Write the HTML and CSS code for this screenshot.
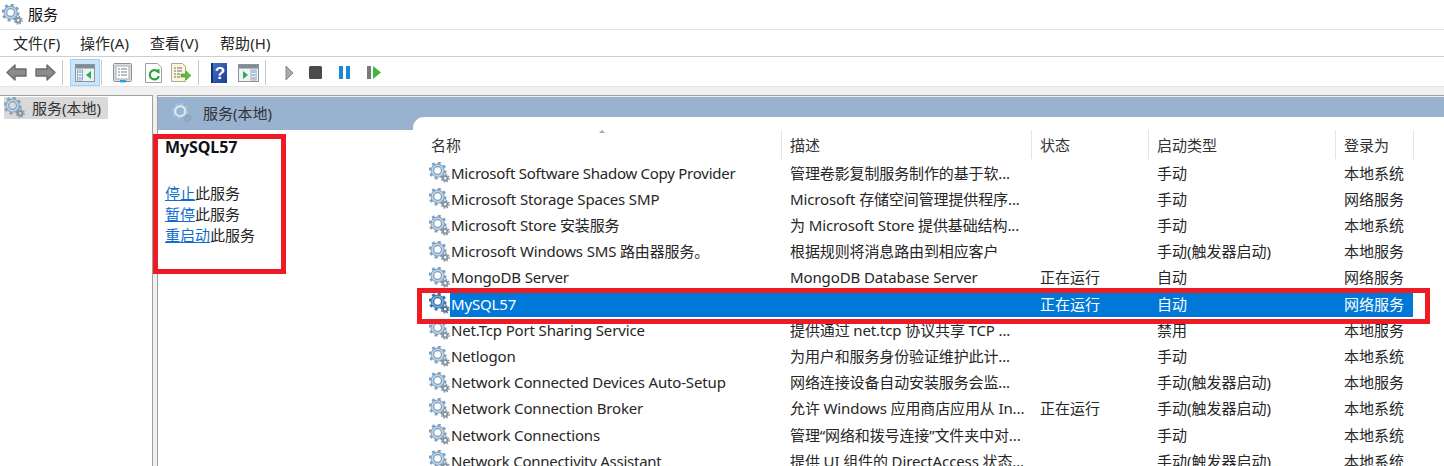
FILE: index.html
```html
<!DOCTYPE html>
<html lang="zh-CN">
<head>
<meta charset="utf-8">
<title>服务</title>
<link rel="stylesheet" href="styles.css">
</head>
<body>
<svg class="defs" width="0" height="0" aria-hidden="true">
  <defs>
    <linearGradient id="helpfill" x1="0" y1="0" x2="1" y2="1"><stop offset="0" stop-color="#4a74cc"/><stop offset="1" stop-color="#1c3c98"/></linearGradient>
  </defs>
  <symbol id="gear" viewBox="0 0 22 22">
    <g fill="none">
      <circle cx="9" cy="9" r="8" stroke="#7f9fbd" stroke-width="2.8" stroke-dasharray="3 3.28"/>
      <circle cx="9" cy="9" r="5.4" stroke="#7f9fbd" stroke-width="4"/>
      <circle cx="9" cy="9" r="5.6" stroke="#bcd4e8" stroke-width="1.8"/>
      <circle cx="17" cy="17" r="2.3" stroke="#84939f" stroke-width="2"/>
      <circle cx="17" cy="17" r="4" stroke="#84939f" stroke-width="1.5" stroke-dasharray="1.6 1.54"/>
    </g>
  </symbol>
  <symbol id="gearsel" viewBox="0 0 22 22">
    <g fill="none">
      <circle cx="9" cy="9" r="8" stroke="#3c72a8" stroke-width="2.8" stroke-dasharray="3 3.28"/>
      <circle cx="9" cy="9" r="5.4" stroke="#3c72a8" stroke-width="4"/>
      <circle cx="9" cy="9" r="5.6" stroke="#78acd8" stroke-width="1.8"/>
      <circle cx="17" cy="17" r="2.3" stroke="#4f7394" stroke-width="2"/>
      <circle cx="17" cy="17" r="4" stroke="#4f7394" stroke-width="1.5" stroke-dasharray="1.6 1.54"/>
    </g>
  </symbol>
  <symbol id="gearpale" viewBox="0 0 22 22">
    <g fill="none">
      <circle cx="9" cy="9" r="8" stroke="#a9c4d8" stroke-width="2.4" stroke-dasharray="3 3.28"/>
      <circle cx="9" cy="9" r="5.4" stroke="#a9c4d8" stroke-width="3.6"/>
      <circle cx="9" cy="9" r="5.6" stroke="#e2eef5" stroke-width="1.8"/>
      <circle cx="17" cy="17" r="2.3" stroke="#8fa3b6" stroke-width="1.8"/>
      <circle cx="17" cy="17" r="4" stroke="#8fa3b6" stroke-width="1.4" stroke-dasharray="1.6 1.54"/>
    </g>
  </symbol>
</svg>

<header class="titlebar">
  <svg class="ico-title"><use href="#gear"/></svg>
  <span>服务</span>
</header>

<nav class="menubar">
  <span>文件(F)</span><span>操作(A)</span><span>查看(V)</span><span>帮助(H)</span>
</nav>

<div class="toolbar">
  <svg class="tb w-nav" viewBox="0 0 21 17"><path d="M1 8.5 9 1v4h11v7H9v4z" fill="#8c8c8c" stroke="#6b6b6b" stroke-width="1.4" stroke-linejoin="round"/></svg>
  <svg class="tb w-nav2" viewBox="0 0 21 17"><path d="M20 8.5 12 1v4H1v7h11v4z" fill="#8c8c8c" stroke="#6b6b6b" stroke-width="1.4" stroke-linejoin="round"/></svg>
  <i class="sep s1"></i>
  <span class="tbactive">
    <svg width="20" height="18" viewBox="0 0 20 18"><rect x=".5" y=".5" width="19" height="17" fill="#eef3f6" stroke="#8a949b"/><rect x="1" y="1" width="18" height="3.5" fill="#7f8c94"/><rect x="2.5" y="6" width="5" height="10" fill="#f4f8fb" stroke="#9ab"/><path d="M3.5 8h3M3.5 11h3M3.5 14h3" stroke="#4f83b5"/><path d="M16 7v8l-5-4z" fill="#2fae4a"/></svg>
  </span>
  <i class="sep s2"></i>
  <svg class="tb i1" viewBox="0 0 20 20"><rect x=".5" y=".5" width="18" height="18" rx="1" fill="#dedede" stroke="#8f8f8f"/><rect x="3" y="3" width="13" height="13" fill="#fff" stroke="#a9a9a9"/><path d="M5 6h2M8 6h6M5 9h2M8 9h6M5 12h2M8 12h6" stroke="#6d7f92"/><rect x="7" y="17" width="6" height="2.4" fill="#2f9be0"/></svg>
  <svg class="tb i2" viewBox="0 0 17 20"><path d="M.5.5h12l4 4v15H.5z" fill="#fff" stroke="#a0a0a0"/><path d="M13 9a4.6 4.6 0 1 0 .8 4" fill="none" stroke="#2ba43c" stroke-width="2.2"/><path d="M10 7.5l4.5-1.5v5z" fill="#2ba43c"/></svg>
  <svg class="tb i3" viewBox="0 0 21 20"><path d="M.5.5h11l3 3v15H.5z" fill="#fdf6dc" stroke="#b3a98a"/><path d="M3 5h2M6 5h5M3 8h2M6 8h5M3 11h2M6 11h3M3 14h2M6 14h3" stroke="#6f6f6f"/><path d="M10 11h5V8l5 4.5-5 4.5v-3h-5z" fill="#5fbf3c" stroke="#3d9a2a" stroke-width=".6"/></svg>
  <i class="sep s3"></i>
  <svg class="tb i4" viewBox="0 0 16 20"><rect width="16" height="20" fill="url(#helpfill)"/><rect x="0" y="0" width="2" height="20" fill="#15307a"/><text x="9" y="16" class="q">?</text></svg>
  <svg class="tb i5" viewBox="0 0 21 18"><rect x=".5" y=".5" width="20" height="17" fill="#eef3f6" stroke="#8a949b"/><rect x="1" y="1" width="19" height="3.5" fill="#7f8c94"/><rect x="13" y="6" width="5" height="10" fill="#f4f8fb" stroke="#9ab"/><path d="M14 8h3M14 11h3M14 14h3" stroke="#4f83b5"/><path d="M5 7v8l5-4z" fill="#2fae4a"/></svg>
  <i class="sep s4"></i>
  <svg class="tb i6" viewBox="0 0 9 16"><path d="M1 1l7 7-7 7z" fill="#a9a9a9" stroke="#8a8a8a"/></svg>
  <svg class="tb i7" viewBox="0 0 13 13"><rect width="13" height="13" rx="1.5" fill="#4a4a4a"/></svg>
  <svg class="tb i8" viewBox="0 0 11 13"><rect width="4" height="13" fill="#1e88d8"/><rect x="7" width="4" height="13" fill="#1e88d8"/></svg>
  <svg class="tb i9" viewBox="0 0 14 13"><rect width="4" height="13" fill="#7a7a7a"/><path d="M6 0l8 6.5L6 13z" fill="#3dba3d"/></svg>
</div>

<main class="workspace">
  <aside class="tree">
    <div class="treeitem"><svg class="ico"><use href="#gear"/></svg><span>服务(本地)</span></div>
  </aside>
  <section class="pane">
    <div class="panehead"><svg class="ico-head"><use href="#gearpale"/></svg><span>服务(本地)</span></div>
    <div class="panebody">
      <div class="desc">
        <h1>MySQL57</h1>
        <p><a>停止</a>此服务</p>
        <p><a>暂停</a>此服务</p>
        <p><a>重启动</a>此服务</p>
      </div>
      <div class="list">
        <div class="row head">
          <div class="c name">名称<b class="caret"></b></div><div class="c d">描述</div><div class="c s">状态</div><div class="c t">启动类型</div><div class="c l">登录为</div>
        </div>
        <div class="row tight"><svg class="ico"><use href="#gear"/></svg><div class="c name">Microsoft Software Shadow Copy Provider</div><div class="c d">管理卷影复制服务制作的基于软...</div><div class="c s"></div><div class="c t">手动</div><div class="c l">本地系统</div></div>
        <div class="row"><svg class="ico"><use href="#gear"/></svg><div class="c name">Microsoft Storage Spaces SMP</div><div class="c d">Microsoft 存储空间管理提供程序...</div><div class="c s"></div><div class="c t">手动</div><div class="c l">网络服务</div></div>
        <div class="row"><svg class="ico"><use href="#gear"/></svg><div class="c name">Microsoft Store 安装服务</div><div class="c d">为 Microsoft Store 提供基础结构...</div><div class="c s"></div><div class="c t">手动</div><div class="c l">本地系统</div></div>
        <div class="row"><svg class="ico"><use href="#gear"/></svg><div class="c name">Microsoft Windows SMS 路由器服务。</div><div class="c d">根据规则将消息路由到相应客户</div><div class="c s"></div><div class="c t">手动(触发器启动)</div><div class="c l">本地服务</div></div>
        <div class="row"><svg class="ico"><use href="#gear"/></svg><div class="c name">MongoDB Server</div><div class="c d">MongoDB Database Server</div><div class="c s">正在运行</div><div class="c t">自动</div><div class="c l">网络服务</div></div>
        <div class="row sel"><svg class="ico"><use href="#gearsel"/></svg><div class="c name">MySQL57</div><div class="c d"></div><div class="c s">正在运行</div><div class="c t">自动</div><div class="c l">网络服务</div></div>
        <div class="row"><svg class="ico"><use href="#gear"/></svg><div class="c name">Net.Tcp Port Sharing Service</div><div class="c d">提供通过 net.tcp 协议共享 TCP ...</div><div class="c s"></div><div class="c t">禁用</div><div class="c l">本地服务</div></div>
        <div class="row"><svg class="ico"><use href="#gear"/></svg><div class="c name">Netlogon</div><div class="c d">为用户和服务身份验证维护此计...</div><div class="c s"></div><div class="c t">手动</div><div class="c l">本地系统</div></div>
        <div class="row"><svg class="ico"><use href="#gear"/></svg><div class="c name">Network Connected Devices Auto-Setup</div><div class="c d">网络连接设备自动安装服务会监...</div><div class="c s"></div><div class="c t">手动(触发器启动)</div><div class="c l">本地服务</div></div>
        <div class="row"><svg class="ico"><use href="#gear"/></svg><div class="c name">Network Connection Broker</div><div class="c d">允许 Windows 应用商店应用从 In...</div><div class="c s">正在运行</div><div class="c t">手动(触发器启动)</div><div class="c l">本地系统</div></div>
        <div class="row"><svg class="ico"><use href="#gear"/></svg><div class="c name">Network Connections</div><div class="c d">管理“网络和拨号连接”文件夹中对...</div><div class="c s"></div><div class="c t">手动</div><div class="c l">本地系统</div></div>
        <div class="row tight"><svg class="ico"><use href="#gear"/></svg><div class="c name">Network Connectivity Assistant</div><div class="c d">提供 UI 组件的 DirectAccess 状态...</div><div class="c s"></div><div class="c t">手动(触发器启动)</div><div class="c l">本地系统</div></div>
      </div>
    </div>
  </section>
</main>

<div class="redbox box-desc"></div>
<div class="redbox box-row"></div>
</body>
</html>
```

FILE: styles.css
```css
* { box-sizing: border-box; }
html, body { margin: 0; height: 466px; overflow: hidden; background: #fff; }
body { font-family: "Noto Sans", "Noto Sans CJK SC", sans-serif; font-size: 15px; color: #262626; line-height: 20px; position: relative; }
.defs { position: absolute; }
.titlebar { height: 30px; display: flex; align-items: center; gap: 5px; padding: 0 0 1px 2px; color: #111; border-bottom: 1px solid #e3e3e3; }
.ico-title { width: 21px; height: 21px; }
.menubar { height: 27px; display: grid; grid-template-columns: 67px 70px 70px auto; align-items: center; padding-left: 13px; border-bottom: 1px solid #cfcfcf; background: #fff; letter-spacing: .1px; }
.toolbar { height: 30px; display: flex; align-items: center; border-bottom: 1px solid #e4e4e4; background: #fff; padding: 2px 0 0 6px; }
.tb { flex: none; display: block; }
.w-nav { width: 21px; height: 17px; }
.w-nav2 { width: 21px; height: 17px; margin-left: 8px; }
.sep { display: block; width: 1px; height: 25px; background: #c9c9c9; flex: none; }
.s1 { margin-left: 6px; }
.tbactive { width: 30px; height: 27px; margin-left: 7px; background: #cce4f7; border: 1px solid #99d1ff; display: flex; align-items: center; justify-content: center; flex: none; }
.s2 { margin-left: 1px; }
.i1 { width: 20px; height: 20px; margin-left: 11px; }
.i2 { width: 17px; height: 20px; margin-left: 12px; }
.i3 { width: 21px; height: 20px; margin-left: 9px; }
.s3 { margin-left: 6px; }
.i4 { width: 16px; height: 20px; margin-left: 12px; }
.i5 { width: 21px; height: 18px; margin-left: 11px; }
.s4 { margin-left: 6px; }
.i6 { width: 9px; height: 16px; margin-left: 19px; }
.i7 { width: 13px; height: 13px; margin-left: 15px; }
.i8 { width: 11px; height: 13px; margin-left: 17px; }
.i9 { width: 14px; height: 13px; margin-left: 17px; }
.q { font: bold 17px "Liberation Sans", sans-serif; fill: #fff; text-anchor: middle; }

.workspace { display: flex; height: 379px; background: #f0f0f0; padding-top: 8px; gap: 4px; }
.tree { width: 153px; background: #fff; border: 1px solid #a0a0a0; border-bottom: 0; border-left: 0; padding: 1px 0 0 4px; flex: none; }
.treeitem { display: flex; align-items: center; height: 22px; width: 104px; background: #d9d9d9; gap: 7px; color: #333; white-space: nowrap; line-height: 18px; padding-bottom: 1px; }
.ico { width: 21px; height: 21px; flex: none; }
.pane { flex: 1; background: #fff; border-left: 1px solid #a0a0a0; border-top: 1px solid #a0a0a0; min-width: 0; }
.panehead { height: 34px; background: #98b2d0; display: flex; align-items: center; padding: 0 0 2px 14px; gap: 11px; border-top: 1px solid #f0f0f0; color: #333; }
.ico-head { width: 20px; height: 20px; }
.panebody { display: flex; height: 340px; }
.desc { width: 255px; flex: none; padding: 6px 0 0 7px; color: #262626; }
.desc h1 { margin: 0 0 25px; font-size: 16px; font-weight: 700; line-height: 22px; color: #111; letter-spacing: -.1px; }
.desc p { margin: 0; height: 21px; line-height: 21px; }
.desc a { color: #0f6cd0; text-decoration: underline; }
.list { flex: 1; background: #fff; margin-top: -13px; border-radius: 11px 0 0 0; padding: 13px 0 0 9px; min-width: 0; }
.row { display: flex; align-items: center; height: 26.2px; white-space: nowrap; }
.row .ico { margin: 0 0 0 7px; }
.row .c { overflow: hidden; flex: none; }
.row .name { width: 340px; padding-left: 1px; letter-spacing: -.15px; }
.row.tight .name { letter-spacing: -.26px; }
.row .d { width: 250px; letter-spacing: -.12px; }
.row .s { width: 117px; }
.row .t { width: 187px; }
.row .l { width: 69px; }
.row.sel { color: #fff; }
.row.sel .c { background: #0078d7; height: 25px; line-height: 24px; margin-top: 1px; }
.row.head { height: 29.6px; }
.head .c { height: 29px; line-height: 30px; border-right: 1px solid #e5e5e5; position: relative; color: #333; padding-left: 8px; overflow: visible; letter-spacing: 0; }
.row.head .name { width: 360px; padding-left: 9px; letter-spacing: 0; overflow: visible; }
.row.head .d { width: 250px; letter-spacing: 0; }
.head .s { width: 117px; }
.head .t { width: 187px; }
.row.head .l { width: 78px; }
.caret { position: absolute; left: 177px; top: -3px; width: 0; height: 0; border: 3px solid transparent; border-bottom: 3px solid #a8a8a8; }

.redbox { position: absolute; border: 5px solid #ed1c24; pointer-events: none; }
.box-desc { left: 153px; top: 134px; width: 133px; height: 140px; }
.box-row { left: 417px; top: 288px; width: 1013px; height: 36px; }
```
